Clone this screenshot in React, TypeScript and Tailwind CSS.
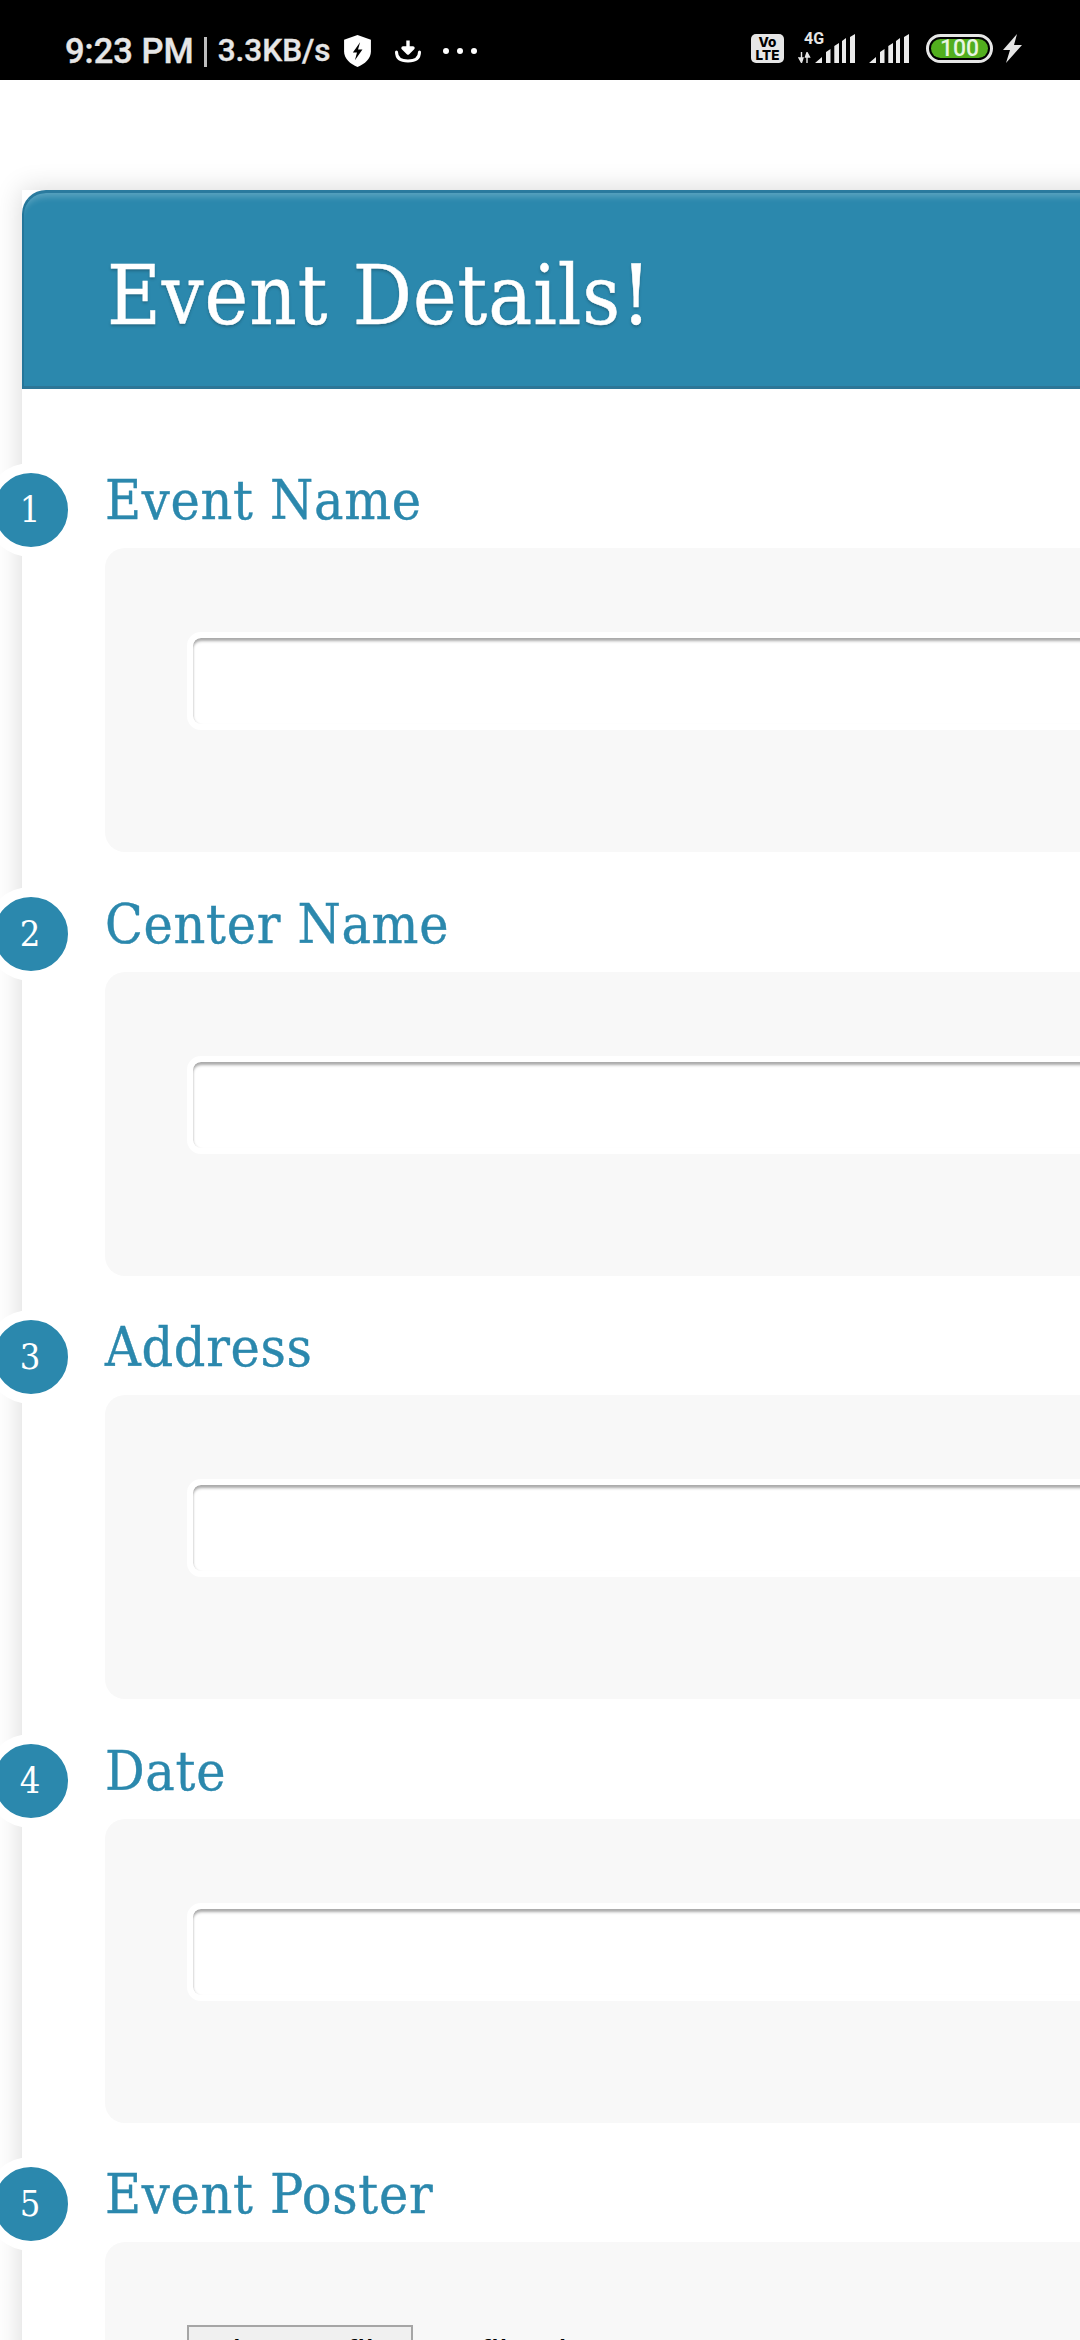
const statusFont = "font-['Roboto',sans-serif]";

function Shield() {
  return (
    <svg width="27" height="32" viewBox="0 0 26 31" className="ml-[13px]">
      <path d="M13 0 L26 4.5 V16 C26 23 20 28 13 31 C6 28 0 23 0 16 V4.5 Z" fill="#fff" />
      <path d="M15.5 7 L8.5 17 H12.5 L10.5 24.5 L17.8 14 H13.5 Z" fill="#000" />
    </svg>
  );
}

function Download() {
  return (
    <svg width="28" height="24" viewBox="0 0 27 24" className="ml-[23px]">
      <path d="M13.5 1.5 V11 M8.5 9 L13.5 14 L18.5 9 Z" stroke="#fff" strokeWidth="3.4" fill="#fff" strokeLinejoin="round" />
      <path d="M2 13 C2 19.5 7 22 13.5 22 C20 22 25 19.5 25 13" stroke="#fff" strokeWidth="3" fill="none" strokeLinecap="round" />
    </svg>
  );
}

function Bars() {
  return (
    <svg width="40" height="29" viewBox="0 0 40 29">
      <path d="M0 29 L7 23 V29 Z M11 29 V18 L15.5 15 V29 Z M19.3 29 V12 L24 9 V29 Z M27 29 V7 L31 4 V29 Z M35 29 V3 L40 0 V29 Z" fill="#ebebeb" />
    </svg>
  );
}

function StatusBar() {
  return (
    <div className={`flex h-[80px] items-start justify-between bg-black pl-[65px] pr-[58px] text-[#e6e6e6] ${statusFont}`}>
      <div className="flex h-[64px] items-center pt-[38px]">
        <span className="text-[34.5px] font-medium leading-none [-webkit-text-stroke:0.4px_#e6e6e6]">9:23 PM</span>
        <span className="ml-[10px] h-[30px] w-[3px] translate-y-[1px] bg-[#bdbdbd]" />
        <span className="ml-[11px] text-[31.5px] font-medium leading-none [-webkit-text-stroke:0.4px_#e6e6e6]">3.3KB/s</span>
        <Shield />
        <Download />
        <div className="ml-[21px] flex gap-[8px]">
          <span className="h-[6px] w-[6px] rounded-full bg-white" />
          <span className="h-[6px] w-[6px] rounded-full bg-white" />
          <span className="h-[6px] w-[6px] rounded-full bg-white" />
        </div>
      </div>
      <div className="flex items-center pt-[34px]">
        <div className="flex h-[29px] w-[33px] flex-col items-center justify-center rounded-[5px] bg-[#e6e6e6] font-['Inter',sans-serif] text-[13.5px] font-extrabold leading-[12.5px] text-black">
          <span>Vo</span>
          <span>LTE</span>
        </div>
        <div className="relative ml-[14px] h-[29px] w-[57px]">
          <span className="absolute left-[6px] top-[-3px] text-[16px] font-bold leading-none">4G</span>
          <svg width="13" height="11" viewBox="0 0 13 11" className="absolute bottom-0 left-0">
            <path d="M3.5 0 V7 M1 6 L3.5 10.5 L5 6 Z M9 11 V4 M7.5 5 L9 0.5 L11.5 5 Z" stroke="#e6e6e6" strokeWidth="1.4" fill="#e6e6e6" />
          </svg>
          <div className="absolute bottom-0 right-0 flex">
            <Bars />
          </div>
        </div>
        <div className="ml-[14px] flex">
          <Bars />
        </div>
        <div className="ml-[17px] flex h-[29px] w-[67px] items-center justify-center rounded-full border-[3px] border-[#e6e6e6] p-[2px]">
          <div className="flex h-full w-full items-center justify-center rounded-full bg-[#52ae1e] text-[23px] font-medium leading-none text-[#e8f5e0]">
            100
          </div>
        </div>
        <svg width="19" height="29" viewBox="0 0 19 29" className="ml-[10px]">
          <path d="M14 0 L0 16 H7 L3 29 L19 11 H11 Z" fill="#e6e6e6" />
        </svg>
      </div>
    </div>
  );
}

function Field({ n, label }: { n: number; label: string }) {
  return (
    <section className="relative h-[423.5px] pl-[83px]">
      <div className="absolute left-[-38px] top-[-6px] flex h-[94px] w-[94px] items-center justify-center rounded-full border-[10px] border-white bg-[#2b88ad] pr-[2px] font-['DejaVu_Serif_Condensed','DejaVu_Serif',serif] text-[36px] leading-none text-white">
        {n}
      </div>
      <h2 className="h-[79px] font-['DejaVu_Serif_Condensed','DejaVu_Serif',serif] text-[55px] font-normal leading-[62px] tracking-[0.7px] text-[#2b88ad] [-webkit-text-stroke:0.4px_#2b88ad]">
        {label}
      </h2>
      <div className="h-[304px] w-[1100px] rounded-[20px] bg-[#f8f8f8] pl-[82px] pt-[84px]">
        {n === 5 ? (
          <div className="-mt-[1px] flex items-start gap-[8px] font-['Liberation_Sans',sans-serif] text-[38px] leading-[44px] text-black">
            <button className="h-[57px] w-[226px] shrink-0 whitespace-nowrap border-2 border-[#a6a6a6] bg-[#f0f0f0] px-[16px] text-left text-[38px] leading-[44px]">
              Choose file
            </button>
            <span className="whitespace-nowrap pt-[7px]">No file chosen</span>
          </div>
        ) : (
          <div className="h-[98px] w-[1100px] rounded-[14px] border-[6px] border-white bg-white shadow-[inset_0_4px_3px_-1px_#a9a9a9,inset_2px_0_2px_-1px_#e5e5e5]" />
        )}
      </div>
    </section>
  );
}

export default function App() {
  return (
    <div className="h-[2340px] w-[1080px] overflow-hidden bg-white">
      <StatusBar />
      <div className="pl-[22px] pt-[110px]">
        <div className="w-[1200px] bg-white shadow-[0_0_26px_rgba(0,0,0,0.16)]">
          <header className="h-[199px] rounded-tl-[24px] border-x-2 border-t-[3px] border-b-[3px] border-x-[#24769a] border-t-[#2a7a9e] border-b-[#2d7697] bg-[#2b88ad] pl-[83px] pt-[55px] shadow-[inset_0_9px_6px_-5px_rgba(255,255,255,0.22)]">
            <h1 className="font-['DejaVu_Serif_Condensed','DejaVu_Serif',serif] text-[82px] font-normal leading-[96px] tracking-[1px] text-white [-webkit-text-stroke:0.5px_#ffffff] [text-shadow:0_2px_3px_rgba(0,0,0,0.25)]">
              Event Details!
            </h1>
          </header>
          <div className="bg-white pt-[80px]">
            <Field n={1} label="Event Name" />
            <Field n={2} label="Center Name" />
            <Field n={3} label="Address" />
            <Field n={4} label="Date" />
            <Field n={5} label="Event Poster" />
          </div>
        </div>
      </div>
    </div>
  );
}
